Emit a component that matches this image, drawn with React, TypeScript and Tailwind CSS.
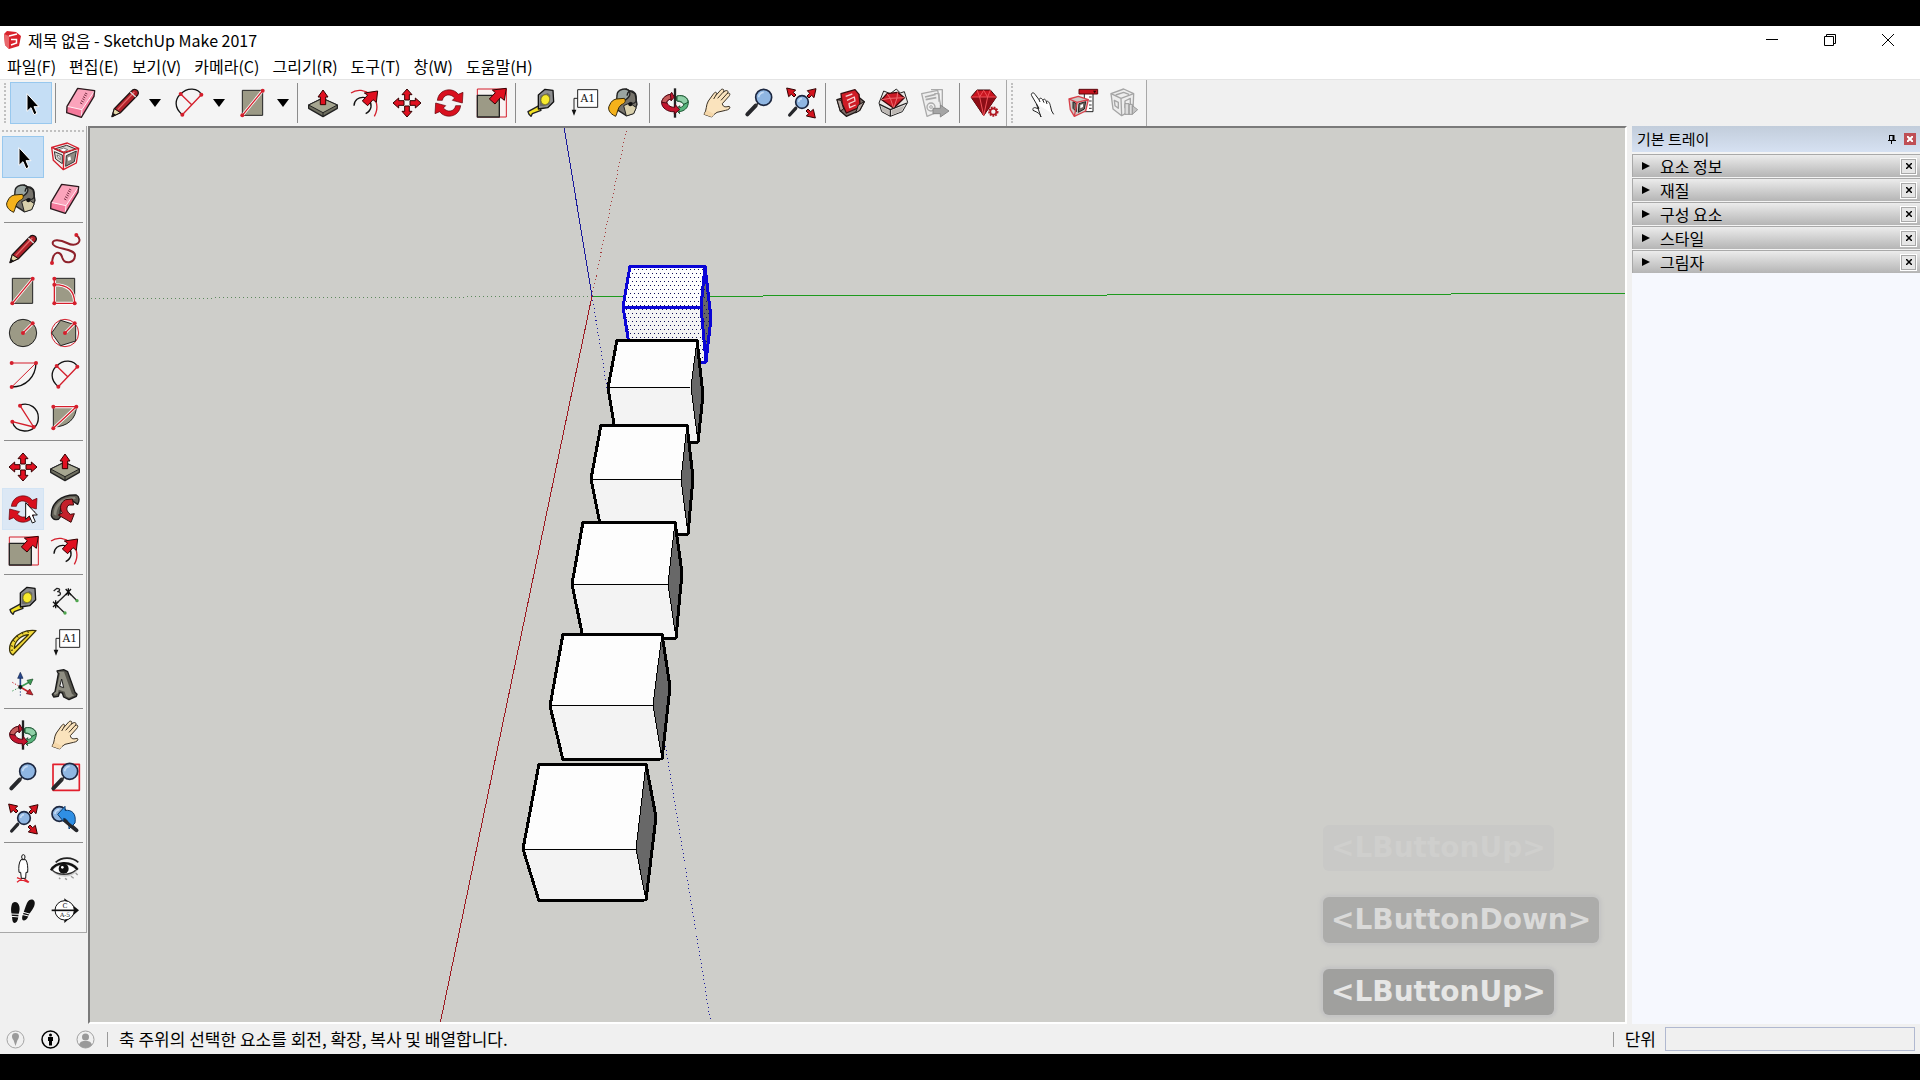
import type { ReactNode } from "react";

const RED = "#e01020";
const OLIVE = "#9c9a86";

type IconProps = { className?: string };

const Icon = ({ children, className = "" }: { children: ReactNode; className?: string }) => (
  <svg
    viewBox="-51 -51 102 102"
    className={`h-[34px] w-[34px] shrink-0 ${className}`}
    fill="none"
    strokeLinejoin="round"
    aria-hidden="true"
  >
    {children}
  </svg>
);

const Dot = ({ x, y }: { x: number; y: number }) => <circle cx={x} cy={y} r="6" fill="#d41f2c" />;

const CursorShape = ({ fill = "#000", stroke = "#fff" }) => (
  <path d="M-12-28V25L0 14 9 35 18 31 9 11H24Z" fill={fill} stroke={stroke} strokeWidth="3" />
);

const SelectIcon = () => (
  <Icon>
    <CursorShape />
  </Icon>
);

const ComponentIcon = () => (
  <Icon>
    <path d="M-40-29 7-42 41-26 34 18-5 38-35 10Z" fill="#f6eded" />
    <path d="M-32-24 5-35 32-24-2-11ZM-32-16-8-6-8 20-28 6Z" fill="#d8d6d0" stroke="#333" strokeWidth="3" />
    <path d="M4-4 34-18 28 14 2 28Z" fill="#8f8b83" stroke="#333" strokeWidth="3" />
    <path d="M-18-22-4-27 8-22-6-14ZM-24-6-15-2-14 8-21 2Z" fill="#fff" stroke="#444" strokeWidth="2" />
    <path d="M8 2 16-2 18 8 10 12Z" fill="#fff" />
    <path d="M-40-29 7-42 41-26 34 18-5 38-35 10ZM-40-29-3-14 41-26M-3-14-5 38" stroke="#d41f2c" strokeWidth="4" />
  </Icon>
);

const PaintIcon = () => (
  <Icon>
    <path d="M-22-31 4-42 30-28 36 4 26 30 4 38-24 20Z" fill="#77746c" stroke="#222" strokeWidth="4" />
    <path d="M-4 8 14 0 34 14 26 32 4 39Z" fill="#d9d0ac" stroke="#222" strokeWidth="3" />
    <path d="M-24-22C-24-44 8-48 14-32 20-12-14-2-26 2Z" fill="#9aa5a1" stroke="#222" strokeWidth="4" />
    <path d="M6-22C10-48 36-36 34-10 34 0 24 4 16-2" stroke="#222" strokeWidth="4" />
    <path d="M-26-12-2-14C4-4 0 0-12 6-22 14-22 28-28 40-46 32-54 18-46 6-42-4-36-10-26-12Z" fill="#f5b21b" stroke="#33270a" strokeWidth="3" />
    <circle cx="16" cy="4" r="6" fill="#111" />
  </Icon>
);

const EraserIcon = () => (
  <Icon>
    <path d="M-10-44 41-37 39-20 1 43-43 29-42 10Z" fill="#f4799b" />
    <path d="M-10-44 41-37 3 20-42 10Z" fill="#fba3bb" />
    <path d="M-42 10 3 20 41-37M3 20 1 43" stroke="#fff0f4" strokeWidth="3" />
    <path d="M-10-44 41-37 39-20 1 43-43 29-42 10Z" stroke="#2b1a1e" strokeWidth="4" />
    <path d="M12-30 19-27M9-25 17-21M6-19 13-15M4-13 11-9M0-7 8-3M-3-1 4 3" stroke="#7d3347" strokeWidth="3" />
  </Icon>
);

const PencilIcon = () => (
  <Icon>
    <path d="M-39 41-32 17 19-35C28-48 46-36 38-24L-14 29Z" fill="#b02029" stroke="#1c1212" strokeWidth="4" />
    <path d="M-39 41-32 17-14 29Z" fill="#e4d7a9" stroke="#1c1212" strokeWidth="3" />
    <path d="M-39 41-35 30-28 35Z" fill="#111" />
    <path d="M-22 20 28-33" stroke="#e36a6a" strokeWidth="4" />
    <path d="M16-33 32-18" stroke="#ddd" strokeWidth="4" />
  </Icon>
);

const FreehandIcon = () => (
  <Icon>
    <path
      d="M34-42C58-22 32-4 6-18-16-30-42-30-36-14-28 2 32-2 30 20 28 44-2 46-8 26-14 4-36 4-39 42"
      stroke="#8e2029"
      strokeWidth="6"
    />
    <Dot x={34} y={-42} />
    <Dot x={-39} y={42} />
  </Icon>
);

const RectangleIcon = () => (
  <Icon>
    <rect x="-32" y="-38" width="61" height="75" fill={OLIVE} stroke="#222" strokeWidth="3" />
    <path d="M-32 37 29-37" stroke="#fff" strokeWidth="9" />
    <path d="M-32 37 29-37" stroke="#d41f2c" strokeWidth="4" />
    <Dot x={-32} y={37} />
    <Dot x={29} y={-37} />
  </Icon>
);

const RotatedRectangleIcon = () => (
  <Icon>
    <rect x="-32" y="-38" width="61" height="75" fill={OLIVE} stroke="#222" strokeWidth="3" />
    <path d="M-32-37V37H29M-32-19C10-19 29 2 29 37" stroke="#fff" strokeWidth="9" />
    <path d="M-32-37V37H29M-32-19C10-19 29 2 29 37" stroke="#d41f2c" strokeWidth="4" />
    <Dot x={-32} y={-37} />
    <Dot x={-32} y={-19} />
    <Dot x={-32} y={37} />
    <Dot x={29} y={37} />
  </Icon>
);

const CircleIcon = () => (
  <Icon>
    <circle r="41" fill={OLIVE} stroke="#222" strokeWidth="3" />
    <path d="M0 0 29-29" stroke="#fff" strokeWidth="9" />
    <path d="M0 0 29-29" stroke="#d41f2c" strokeWidth="4" />
    <Dot x={0} y={0} />
    <Dot x={29} y={-29} />
  </Icon>
);

const PolygonIcon = () => (
  <Icon>
    <circle r="41" stroke="#d41f2c" strokeWidth="3" />
    <path d="M-13-38 32-24V24L-13 38-40 0Z" fill={OLIVE} stroke="#222" strokeWidth="3" />
    <path d="M0 0 29-29" stroke="#fff" strokeWidth="9" />
    <path d="M0 0 29-29" stroke="#d41f2c" strokeWidth="4" />
    <Dot x={0} y={0} />
    <Dot x={29} y={-29} />
  </Icon>
);

const TwoPointArcIcon = () => (
  <Icon>
    <path d="M39-36C38 4 10 36-34 36" stroke="#111" strokeWidth="4" />
    <path d="M-34-36H39L-34 36" stroke="#d41f2c" strokeWidth="3" />
    <Dot x={-34} y={-36} />
    <Dot x={39} y={-36} />
    <Dot x={-34} y={36} />
  </Icon>
);

const ArcIcon = () => (
  <Icon>
    <path d="M-20 35C-46 14-42-12-25-27-6-48 28-46 37-25" stroke="#111" strokeWidth="4" />
    <path d="M37-25-20 35M-25-27 8 5" stroke="#d41f2c" strokeWidth="4" />
    <Dot x={-25} y={-27} />
    <Dot x={37} y={-25} />
    <Dot x={-20} y={35} />
  </Icon>
);

const ThreePointArcIcon = () => (
  <Icon>
    <path d="M-9-36C20-46 46-26 46 2 46 26 28 43 4 42-16 41-28 30-32 14" stroke="#111" strokeWidth="4" />
    <path d="M-9-34 32 30-32 14" stroke="#d41f2c" strokeWidth="4" />
    <Dot x={-9} y={-34} />
    <Dot x={-32} y={14} />
    <Dot x={32} y={30} />
  </Icon>
);

const PieIcon = () => (
  <Icon>
    <path d="M-35-31H34C34 4 8 30-35 30Z" fill={OLIVE} stroke="#222" strokeWidth="3" />
    <path d="M-35-31H34L-35 34" stroke="#fff" strokeWidth="9" />
    <path d="M-35-31H34L-35 34" stroke="#d41f2c" strokeWidth="4" />
    <Dot x={-35} y={-31} />
    <Dot x={34} y={-31} />
    <Dot x={-35} y={34} />
  </Icon>
);

const MoveIcon = () => (
  <Icon>
    {[0, 90, 180, 270].map((angle) => (
      <path
        key={angle}
        d="M0-42 15-25H7V-9H-7V-25H-15Z"
        transform={`rotate(${angle})`}
        fill={RED}
        stroke="#300"
        strokeWidth="3"
      />
    ))}
  </Icon>
);

const PushPullIcon = () => (
  <Icon>
    <path d="M-43 6-2-14 43 6V16L0 41-43 16Z" fill="#6f6f60" stroke="#222" strokeWidth="4" />
    <path d="M-43 6-2-14 43 6 0 29Z" fill="#a6a691" stroke="#222" strokeWidth="3" />
    <path d="M0 29V41" stroke="#222" strokeWidth="3" />
    <path d="M0-39 15-18H8V5H-8V-18H-15Z" fill={RED} stroke="#300" strokeWidth="3" />
  </Icon>
);

const RotateShape = () => (
  <>
    {[0, 180].map((angle) => (
      <path
        key={angle}
        d="M-35-8C-30-44 12-48 28-26L42-32 40 0 10-8 17-15C4-30-16-26-20-8Z"
        transform={`rotate(${angle})`}
        fill="#d8101e"
        stroke="#5a0008"
        strokeWidth="2"
      />
    ))}
  </>
);

const RotateIcon = () => (
  <Icon>
    <RotateShape />
  </Icon>
);

const RotateHoverIcon = () => (
  <Icon className="overflow-visible">
    <RotateShape />
    <path d="M8-19V31L19 21 28 42 37 38 28 18H43Z" fill="#fff" stroke="#111" strokeWidth="3" />
  </Icon>
);

const FollowMeIcon = () => (
  <Icon>
    <path
      d="M-41 20C-42-16-14-44 34-42 44-38 44-24 38-14L20-26C-2-28-18-10-14 24-20 36-36 34-41 20Z"
      fill="#5f5d54"
      stroke="#1a1a1a"
      strokeWidth="4"
    />
    <path d="M-34 16C-34-14-10-36 30-36L32-30C-4-30-26-10-26 20Z" fill="#8c8a7e" />
    <path d="M22-30 2-28C-14-20-18-2-8 12L-20 18 18 40 28 14 16 16C4 8 2-6 12-12L26-12Z" fill="#c4212b" stroke="#3a0a0a" strokeWidth="3" />
  </Icon>
);

const BigArrow = () => (
  <path d="M46-44 40-8 29-17 12 3-5-12 13-31 4-39Z" fill={RED} stroke="#300" strokeWidth="3" />
);

const ScaleIcon = () => (
  <Icon>
    <path d="M-41-42H46V42H-41Z" stroke="#d41f2c" strokeWidth="3" fill="#f9f2f2" />
    <rect x="-41" y="-23" width="66" height="65" fill={OLIVE} stroke="#222" strokeWidth="4" />
    <BigArrow />
  </Icon>
);

const OffsetIcon = () => (
  <Icon>
    <path d="M-42-30C-6-56 58-14 28 40" stroke="#d41f2c" strokeWidth="4" />
    <path d="M-33 8C-32-26 22-26 18 12 16 22 10 28 2 32" stroke="#111" strokeWidth="4" />
    <path d="M38-36 34-2 24-10 8 8-8-6 8-24-2-30Z" fill={RED} stroke="#300" strokeWidth="3" />
  </Icon>
);

const TapeIcon = () => (
  <Icon>
    <path d="M-39 26-6 8 0 22-26 32-30 40-36 34Z" fill="#f3e325" stroke="#222" strokeWidth="4" />
    <path d="M-8-24 12-41 36-38 38-4 20 14-8 18Z" fill="#8e8f90" stroke="#111" strokeWidth="4" />
    <path d="M-2-22 20-30 28-24 26 4 8 10-4 8Z" fill="#6a6a68" />
    <ellipse cx="13" cy="-10" rx="13" ry="15" fill="#f7ea2e" stroke="#776f10" strokeWidth="2" transform="rotate(15 13 -10)" />
  </Icon>
);

const DimensionIcon = () => (
  <Icon>
    <path d="M-28 10 10-27M-28 10-1 36M10-27 36-1" stroke="#222" strokeWidth="4" />
    <path d="M-36 2-20 18M-20 2-36 18M-28-2V22M2-36 18-18M18-36 2-18M10-38V-16" stroke="#111" strokeWidth="4" />
    <path d="M-34-30-24-38C-14-38-14-30-22-28-12-28-10-16-22-16" stroke="#222" strokeWidth="4" />
    <circle cx="0" cy="36" r="5" fill="#4fa64e" />
    <circle cx="36" cy="-1" r="5" fill="#4fa64e" />
  </Icon>
);

const ProtractorIcon = () => (
  <Icon>
    <path
      d="M39-37-30 36C-44 30-44 6-28-12-10-32 14-40 39-37ZM16-25C-8-22-26-4-26 16Z"
      fill="#f2d93a"
      fillRule="evenodd"
      stroke="#3a3208"
      strokeWidth="4"
    />
    <path d="M-36 8-30 10M-30-8-24-4M-18-22-14-16M-2-31 0-26M14-36 16-30M-36 22-30 21" stroke="#3a3208" strokeWidth="3" />
  </Icon>
);

const TextIcon = () => (
  <Icon>
    <rect x="-16" y="-40" width="60" height="53" fill="#fff" stroke="#222" strokeWidth="3" />
    <text x="14" y="-3" fontSize="32" fontFamily="'DejaVu Serif', serif" textAnchor="middle" fill="#111">
      A1
    </text>
    <path d="M-16-14H-27V26" stroke="#222" strokeWidth="3" />
    <path d="M-34 20H-20L-27 38Z" fill="#111" />
  </Icon>
);

const AxesIcon = () => (
  <Icon>
    <path d="M-8 6V-26" stroke="#27478c" strokeWidth="5" />
    <path d="M-8-38 0-20H-16Z" fill="#27478c" stroke="#14264f" strokeWidth="2" />
    <path d="M-8 6 18-8" stroke="#3d9a55" strokeWidth="5" />
    <path d="M30-18 22 0 12-14Z" fill="#3d9a55" stroke="#1c4d29" strokeWidth="2" />
    <path d="M-8 6 16 20" stroke="#c7222c" strokeWidth="5" />
    <path d="M30 30 10 26 20 12Z" fill="#c7222c" stroke="#5d0e12" strokeWidth="2" />
    <path d="M-8 10V36" stroke="#27478c" strokeWidth="3" strokeDasharray="4 5" />
    <path d="M-32 18-8 6" stroke="#3d9a55" strokeWidth="3" strokeDasharray="4 5" />
    <path d="M-32-8-8 6" stroke="#c7222c" strokeWidth="3" strokeDasharray="4 5" />
    <circle cx="-8" cy="6" r="6" fill="#111" />
  </Icon>
);

const ThreeDTextIcon = () => (
  <Icon>
    <path
      d="M-24-42-4-46 8-40 30 22 36 28 34 34 12 44-4 36-8 24-16 22-20 34-34 36-38 28-30 20-20-34Z"
      fill="#55544c"
      stroke="#1a1a1a"
      strokeWidth="4"
    />
    <path d="M-22-40H-3L21 27 28 31 12 38 3 34-1 20-19 14-21 25-30 30-34 25-27 20-15-35Z" fill="#8f8e82" />
    <path d="M-10-18-16 4-4 8Z" fill="#f2f2f2" stroke="#222" strokeWidth="3" />
  </Icon>
);

const OrbitIcon = () => (
  <Icon>
    <path d="M0-44V44" stroke="#222" strokeWidth="7" />
    <path d="M5-20C30-28 46-10 38 8 36 18 22 26 12 26L14 32 2 20 14 8V14C22 12 28 8 26 2 18-6 6-4 4-8Z" fill="#58b47c" stroke="#1d5633" strokeWidth="3" />
    <path d="M6-21C26-26 40-14 39-2L26 4C20-6 12-6 6-6Z" fill="#8fd0a7" stroke="#1d5633" strokeWidth="3" />
    <path d="M-14-26-10-32-2-18-12-6V-12C-22-10-26-4-24 0-18 12-6 14 0 12V4L14 20-2 33V26C-22 28-40 14-40 0-40-14-26-24-14-26Z" fill="#c3142d" stroke="#4f0713" strokeWidth="3" />
    <path d="M-40-2C-38-16-26-24-14-26L-12-12C-22-10-26-4-25 0Z" fill="#c65a5a" stroke="#4f0713" strokeWidth="3" />
  </Icon>
);

const HandIcon = () => (
  <Icon>
    <path
      d="M-39 34C-30 22-34 6-26-6L-10-28C-4-36 2-32-4-22L12-40C18-44 24-40 18-32L24-36C32-40 36-34 30-28L34-30C40-30 40-24 34-18L16 2C18 14 28 12 36 10 42 12 38 20 26 22L0 28C-8 34-14 38-16 42Z"
      fill="#fae3bd"
      stroke="#3a3023"
      strokeWidth="3"
    />
    <path d="M-4-22-10-12M18-32 2-14M30-28 12-8" stroke="#3a3023" strokeWidth="3" />
    <path d="M-16 42-39 34-30 22-8 34Z" fill="#f5d7a9" />
  </Icon>
);

const Lens = ({ cx, cy, r }: { cx: number; cy: number; r: number }) => (
  <>
    <circle cx={cx} cy={cy} r={r} fill="#8fb6e2" stroke="#1c2740" strokeWidth="5" />
    <path d={`M${cx - r + 9} ${cy}A${r - 9} ${r - 9} 0 0 1 ${cx} ${cy - r + 9}`} stroke="#c6dcf4" strokeWidth="5" />
  </>
);

const ZoomIcon = () => (
  <Icon>
    <path d="M-35 34-10 8" stroke="#26272b" strokeWidth="12" strokeLinecap="round" />
    <path d="M-12 10 2-4" stroke="#333" strokeWidth="5" />
    <Lens cx={14} cy={-17} r={24} />
  </Icon>
);

const ZoomWindowIcon = () => (
  <Icon>
    <rect x="-36" y="-38" width="79" height="78" stroke="#e21f2c" strokeWidth="5" />
    <path d="M-35 34-10 8" stroke="#26272b" strokeWidth="12" strokeLinecap="round" />
    <path d="M-12 10 2-4" stroke="#333" strokeWidth="5" />
    <Lens cx={14} cy={-17} r={24} />
  </Icon>
);

const ZoomExtentsIcon = () => (
  <Icon>
    <path d="M-34 36-16 16" stroke="#26272b" strokeWidth="10" strokeLinecap="round" />
    <Lens cx={3} cy={-3} r={19} />
    {[0, 90, 270].map((angle) => (
      <path
        key={angle}
        d="M45-43 39-16 32-23 24-15 18-21 26-29 19-37Z"
        transform={`rotate(${angle})`}
        fill="#d4141f"
        stroke="#300"
        strokeWidth="3"
      />
    ))}
  </Icon>
);

const PreviousViewIcon = () => (
  <Icon>
    <Lens cx={-17} cy={-15} r={22} />
    <path d="M-2 2 35 34" stroke="#26272b" strokeWidth="11" strokeLinecap="round" />
    <path d="M-22-14 0-38V-26C22-28 34-16 30 12L12 30C12 12 8 0-4-2V8Z" fill="#2f8fe4" stroke="#0f3d6e" strokeWidth="3" />
    <path d="M0 6 32 33" stroke="#26272b" strokeWidth="9" strokeLinecap="round" />
  </Icon>
);

const PositionCameraIcon = () => (
  <Icon>
    <path d="M-18 40 0 26 18 40M-18 26 16 40" stroke="#e02430" strokeWidth="4" />
    <ellipse cx="1" cy="-36" rx="5" ry="7" fill="#fff" stroke="#111" strokeWidth="3" />
    <path d="M-6-28H8C14-20 15-4 14 10H9L8 28H-5L-7 10H-12C-14-6-12-20-6-28Z" fill="#fff" stroke="#111" strokeWidth="3" />
  </Icon>
);

const EyeIcon = () => (
  <Icon>
    <path d="M-40 4C-24-26 18-30 40-4 34 18 8 26-10 22-26 20-34 12-40 4Z" fill="#c9c9c9" />
    <path d="M-36 4C-20-16 14-18 32 2 16 18-18 20-36 4Z" fill="#fff" />
    <path d="M-42 4C-28-22 16-26 38 2" stroke="#111" strokeWidth="7" />
    <path d="M-28-20C-8-38 22-36 40-20" stroke="#222" strokeWidth="5" />
    <path d="M-38 4C-20 20 14 20 32 4" stroke="#333" strokeWidth="4" />
    <circle cx="-4" cy="-1" r="15" fill="#111" />
    <circle cx="-8" cy="-5" r="4" fill="#fff" />
    <path d="M-18 26-14 30M0 28 6 32M18 22 26 28M32 12 38 18" stroke="#999" strokeWidth="4" />
  </Icon>
);

const WalkIcon = () => (
  <Icon>
    <path d="M-34-18C-30-32-14-28-11-14-8 0-14 8-14 18-16 38-30 42-32 26-32 12-39 0-34-18Z" fill="#111" />
    <path d="M12-24C20-40 38-36 35-20 32-4 20 4 16 16 8 34-6 32-2 16 2 4 6-10 12-24Z" fill="#111" />
    <path d="M-36 9-10 10M-35 16-12 18M-2 3 23 10M-4 10 20 16" stroke="#fff" strokeWidth="3" />
  </Icon>
);

const SectionIcon = () => (
  <Icon>
    <path d="M-2-38 42-2-2 36Z" fill="#111" />
    <circle cx="-1" cy="-2" r="29" fill="#fff" stroke="#111" strokeWidth="3" />
    <path d="M-40-2H36" stroke="#111" strokeWidth="5" />
    <text x="0" y="-8" fontSize="20" fontFamily="'DejaVu Serif', serif" textAnchor="middle" fill="#111">C</text>
    <text x="0" y="17" fontSize="18" fontFamily="'DejaVu Serif', serif" textAnchor="middle" fill="#111">A-5</text>
  </Icon>
);

const WarehouseIcon = () => (
  <Icon>
    <path d="M-42-10-22-16 20-20 40-4 26 22-14 40-32 24Z" fill="#7b6f6a" stroke="#1d1615" strokeWidth="4" />
    <path d="M-30-28 12-40 24-26 28 12-14 30-26 4Z" fill="#cf1c26" stroke="#3a0b0d" strokeWidth="4" />
    <path d="M-16-20 4-27M-12-8 10-18 12-6-6 2-4 14 14 6" stroke="#f6d0d0" strokeWidth="4" />
    <path d="M-42-10-30-8-22 18-32 24ZM40-4 26 22 14 30 22 6Z" fill="#b3a59f" stroke="#1d1615" strokeWidth="3" />
  </Icon>
);

const ExtensionWarehouseIcon = () => (
  <Icon>
    <path d="M-42 0-28-36-8-28 10-42 22-30 34-34 44-2 28 26-8 40-34 26Z" fill="#e9e6e4" stroke="#222" strokeWidth="3" />
    <path d="M-34-10-18-28 14-32 34-16 2 16Z" fill="#cb1a26" stroke="#3c0709" strokeWidth="4" />
    <path d="M-34-10-8-14 34-16M-18-28-8-14 2 16 12-15 14-32" stroke="#ee6a6e" strokeWidth="3" />
    <path d="M-40 4-8 20-8 40M-8 20 42 0" stroke="#222" strokeWidth="4" />
    <path d="M-36 10-12 22-12 36-32 24ZM-4 22 34 8 26 24-4 36Z" fill="#bdb8b4" />
  </Icon>
);

const LayOutIcon = () => (
  <Icon>
    <path d="M-40-28 8-38 20 22-24 40Z" fill="#eee" stroke="#aaa" strokeWidth="4" />
    <path d="M-12-40H22V10M-2-28H12V-4" stroke="#aaa" strokeWidth="4" />
    <path d="M-30-18 2-26M-28-10 4-16" stroke="#aaa" strokeWidth="5" />
    <circle cx="-12" cy="12" r="12" stroke="#aaa" strokeWidth="4" />
    <circle cx="-12" cy="12" r="4" stroke="#aaa" strokeWidth="3" />
    <path d="M-6 16H16V6L42 24 16 42V32H-6Z" fill="#a5a5a5" stroke="#888" strokeWidth="3" />
  </Icon>
);

const ExtensionManagerIcon = () => (
  <Icon>
    <path d="M-42-18-24-39H16L34-18-4 38Z" fill="#c9141f" stroke="#3b0508" strokeWidth="3" />
    <path d="M-42-18H34L-4 38Z" fill="#8d0d16" />
    <path d="M-24-39-16-18-4-38 8-18 16-39M-42-18H34M-16-18-4 38 8-18" stroke="#ef5158" strokeWidth="3" />
    <circle cx="25" cy="26" r="12" fill="#f3f3f3" stroke="#b01822" strokeWidth="7" strokeDasharray="5 3" />
    <circle cx="25" cy="26" r="9" stroke="#b01822" strokeWidth="5" />
  </Icon>
);

const InteractIcon = () => (
  <Icon>
    <path
      d="M-14 2-28-22C-32-30-22-34-18-26L-6-10C-4-16 2-16 6-8 8-14 14-12 16-4 20-8 26-2 28 8L32 24 38 34M0 42C-2 32-10 28-24 22-26 14-20 12-12 16L-6 16-14 2Z"
      fill="#fff"
      stroke="#222"
      strokeWidth="3"
    />
    <path d="M-6-10-3-3M6-8 9-1M16-4 18 3" stroke="#222" strokeWidth="3" />
  </Icon>
);

const ComponentOptionsIcon = () => (
  <Icon>
    <path d="M4-30H30V26H4Z" fill="#fff" stroke="#222" strokeWidth="3" />
    <path d="M18-18H26M18-6H26M18 6H26M18 16H26" stroke="#333" strokeWidth="3" />
    <path d="M-12-41H44V-27H-12Z" fill="#c5121d" stroke="#5c060b" strokeWidth="3" />
    <path d="M30-37H40L35-29Z" fill="#300" />
    <path d="M-42-12-14-20 16-10 8 24-26 40-38 20Z" fill="#cfc9c5" />
    <path d="M-30-4-20 2V26L-30 16ZM-12 2 8-4 4 18-14 28Z" fill="#6f6862" stroke="#222" strokeWidth="3" />
    <path d="M-8 6 0 3V12L-8 16Z" fill="#fff" />
    <path d="M-42-12-14-20 16-10 8 24-26 40-38 20ZM-42-12-18-2 16-10M-18-2-26 40" stroke="#d8404a" strokeWidth="4" />
  </Icon>
);

const ComponentAttributesIcon = () => (
  <Icon>
    <path d="M-42-28-4-42 26-28 24 20-10 38-36 18Z" fill="#ededed" stroke="#a5a5a5" strokeWidth="4" />
    <path d="M-42-28-12-14 26-28M-12-14-10 38M-28-24-4-32 12-26M-32-8-20-2-20 16-30 8ZM0-6 16-14V6L0 14Z" stroke="#a5a5a5" strokeWidth="4" />
    <path d="M0 2H12V34H0ZM12 4H22V34H12Z" fill="#ddd" stroke="#999" strokeWidth="3" />
    <path d="M22 8 38 20 22 34Z" fill="#c4c4c4" stroke="#999" strokeWidth="3" />
  </Icon>
);

type Tool = { label: string; icon: (props: IconProps) => ReactNode; menu?: boolean; active?: boolean; hover?: boolean };

const mainGroups: Tool[][] = [
  [{ label: "선택", icon: SelectIcon, active: true }],
  [
    { label: "지우개", icon: EraserIcon },
    { label: "선", icon: PencilIcon, menu: true },
    { label: "호", icon: ArcIcon, menu: true },
    { label: "직사각형", icon: RectangleIcon, menu: true },
  ],
  [
    { label: "밀기/끌기", icon: PushPullIcon },
    { label: "오프셋", icon: OffsetIcon },
    { label: "이동", icon: MoveIcon },
    { label: "회전", icon: RotateIcon },
    { label: "배율", icon: ScaleIcon },
  ],
  [
    { label: "줄자", icon: TapeIcon },
    { label: "텍스트", icon: TextIcon },
    { label: "페인트통", icon: PaintIcon },
  ],
  [
    { label: "궤도", icon: OrbitIcon },
    { label: "이동 보기", icon: HandIcon },
    { label: "확대/축소", icon: ZoomIcon },
    { label: "범위 확대/축소", icon: ZoomExtentsIcon },
  ],
  [
    { label: "3D Warehouse", icon: WarehouseIcon },
    { label: "Extension Warehouse", icon: ExtensionWarehouseIcon },
    { label: "LayOut으로 보내기", icon: LayOutIcon },
  ],
  [{ label: "확장 프로그램 관리자", icon: ExtensionManagerIcon }],
];

const dynamicTools: Tool[] = [
  { label: "상호 작용", icon: InteractIcon },
  { label: "구성 요소 옵션", icon: ComponentOptionsIcon },
  { label: "구성 요소 특성", icon: ComponentAttributesIcon },
];

const sideGroups: Tool[][] = [
  [
    { label: "선택", icon: SelectIcon, active: true },
    { label: "구성 요소 만들기", icon: ComponentIcon },
    { label: "페인트통", icon: PaintIcon },
    { label: "지우개", icon: EraserIcon },
  ],
  [
    { label: "선", icon: PencilIcon },
    { label: "자유형", icon: FreehandIcon },
    { label: "직사각형", icon: RectangleIcon },
    { label: "회전된 직사각형", icon: RotatedRectangleIcon },
    { label: "원", icon: CircleIcon },
    { label: "다각형", icon: PolygonIcon },
    { label: "호", icon: TwoPointArcIcon },
    { label: "2점 호", icon: ArcIcon },
    { label: "3점 호", icon: ThreePointArcIcon },
    { label: "파이", icon: PieIcon },
  ],
  [
    { label: "이동", icon: MoveIcon },
    { label: "밀기/끌기", icon: PushPullIcon },
    { label: "회전", icon: RotateHoverIcon, hover: true },
    { label: "따라가기", icon: FollowMeIcon },
    { label: "배율", icon: ScaleIcon },
    { label: "오프셋", icon: OffsetIcon },
  ],
  [
    { label: "줄자", icon: TapeIcon },
    { label: "치수", icon: DimensionIcon },
    { label: "각도기", icon: ProtractorIcon },
    { label: "텍스트", icon: TextIcon },
    { label: "축", icon: AxesIcon },
    { label: "3D 텍스트", icon: ThreeDTextIcon },
  ],
  [
    { label: "궤도", icon: OrbitIcon },
    { label: "이동 보기", icon: HandIcon },
    { label: "확대/축소", icon: ZoomIcon },
    { label: "확대/축소 창", icon: ZoomWindowIcon },
    { label: "범위 확대/축소", icon: ZoomExtentsIcon },
    { label: "이전", icon: PreviousViewIcon },
  ],
  [
    { label: "카메라 배치", icon: PositionCameraIcon },
    { label: "둘러보기", icon: EyeIcon },
    { label: "이동 시점", icon: WalkIcon },
    { label: "단면", icon: SectionIcon },
  ],
];

const ToolButton = ({ tool }: { tool: Tool }) => {
  const state = tool.active
    ? "border-[#98c8ee] bg-[#c5def5]"
    : tool.hover
      ? "border-[#d3e4f4] bg-[#dce8f5]"
      : "border-transparent";
  return (
    <button
      type="button"
      aria-label={tool.label}
      className={`flex h-[42px] w-[42px] shrink-0 items-center justify-center border ${state}`}
    >
      <tool.icon />
    </button>
  );
};

const TitleBar = () => (
  <header className="flex h-7 items-center justify-between">
    <div className="flex items-center gap-1.5 pl-1">
      <svg viewBox="0 0 18 20" className="h-5 w-[18px]" aria-hidden="true">
        <path d="M0 4 3 1 12 2 17 6 15 16 5 19 1 15Z" fill="#d9222c" />
        <path d="M0 4 5 6 5 19 1 15Z" fill="#e8686c" />
        <path d="M5 6 13 4M7 9.500H12.500V13L7 15" fill="none" stroke="#fff" strokeWidth="1.500" />
      </svg>
      <h1 className="text-[16px] leading-5">제목 없음 - SketchUp Make 2017</h1>
    </div>
    <div className="flex pr-[3px]">
      <button type="button" aria-label="최소화" className="flex w-[58px] justify-center">
        <svg viewBox="0 0 12 12" className="h-3 w-3" stroke="#000"><path d="M0 5.500H12" /></svg>
      </button>
      <button type="button" aria-label="이전 크기로" className="flex w-[58px] justify-center">
        <svg viewBox="0 0 12 12" className="h-3 w-3" fill="none" stroke="#000">
          <path d="M.5 2.500H9.500V11.500H.5ZM2.500 2.500V.5H11.500V9.500H9.500" />
        </svg>
      </button>
      <button type="button" aria-label="닫기" className="flex w-[58px] justify-center">
        <svg viewBox="0 0 12 12" className="h-3 w-3" stroke="#000"><path d="M0 0 12 12M12 0 0 12" /></svg>
      </button>
    </div>
  </header>
);

const menus = ["파일(F)", "편집(E)", "보기(V)", "카메라(C)", "그리기(R)", "도구(T)", "창(W)", "도움말(H)"];

const MenuBar = () => (
  <nav className="flex h-[25px] items-start">
    {menus.map((menu) => (
      <button key={menu} type="button" className="pl-[7px] pr-1.5 pt-0.5 text-[16px] leading-5">
        {menu}
      </button>
    ))}
  </nav>
);

const MainToolbar = () => (
  <div className="flex h-[47px] items-stretch border-t border-[#e4e4e4] bg-[#f0f0f0]">
    <div role="toolbar" className="flex items-center border-r border-[#a8a8a8] bg-[#f4f4f4]">
      <span className="ml-1 mr-1 h-10 w-0.5 border-l-2 border-dotted border-[#c0c0c0]" />
      {mainGroups.map((group, index) => (
        <div key={index} className="flex items-center">
          {index > 0 && <span className="ml-[3px] mr-1 h-10 w-px bg-[#8c8c8c]" />}
          {group.map((tool) => (
            <div key={tool.label} className={tool.menu ? "flex pl-0.5" : "flex"}>
              <ToolButton tool={tool} />
              {tool.menu && (
                <button type="button" aria-label={`${tool.label} 메뉴`} className="flex w-5 items-center pl-[3px]">
                  <svg viewBox="0 0 12 8" className="h-2 w-3"><path d="M0 0H12L6 8Z" /></svg>
                </button>
              )}
            </div>
          ))}
        </div>
      ))}
    </div>
    <div role="toolbar" className="flex items-center border-r border-[#a8a8a8] bg-[#f4f4f4]">
      <span className="ml-1 mr-[7px] h-10 w-0.5 border-l-2 border-dotted border-[#c0c0c0]" />
      {dynamicTools.map((tool) => (
        <ToolButton key={tool.label} tool={tool} />
      ))}
    </div>
  </div>
);

const SideToolbar = () => (
  <aside className="w-[88px] shrink-0 bg-[#f0f0f0]">
    <div role="toolbar" className="mr-px border-b border-r border-[#a8a8a8] bg-[#f4f4f4] pl-0.5">
      <div className="flex h-[10px] items-center">
        <span className="h-0.5 w-[82px] border-t-2 border-dotted border-[#c0c0c0]" />
      </div>
      {sideGroups.map((group, index) => (
        <div key={index}>
          {index > 0 && <div className="mb-[5px] ml-0.5 mr-[3px] mt-0.5 h-px bg-[#8c8c8c]" />}
          <div className="grid grid-cols-2">
            {group.map((tool) => (
              <ToolButton key={tool.label} tool={tool} />
            ))}
          </div>
        </div>
      ))}
    </div>
  </aside>
);

type Point = [number, number];
type Cube = { tl: Point; tr: Point; left: Point; front: Point; right: Point; br: Point; bl: Point; selected?: boolean };

const cubes: Cube[] = [
  { tl: [630, 266], tr: [705, 266], left: [623, 307], front: [701, 307], right: [711, 318], br: [706, 362], bl: [632, 362], selected: true },
  { tl: [617, 340], tr: [697, 340], left: [608, 388], front: [691, 387], right: [703, 395], br: [698, 442], bl: [617, 442] },
  { tl: [601, 425], tr: [687, 425], left: [591, 479], front: [681, 479], right: [693, 478], br: [688, 534], bl: [602, 534] },
  { tl: [583, 522], tr: [675, 522], left: [572, 584], front: [668, 584], right: [682, 573], br: [676, 638], bl: [583, 638] },
  { tl: [563, 634], tr: [662, 634], left: [550, 706], front: [653, 705], right: [670, 687], br: [662, 759], bl: [563, 760] },
  { tl: [539, 764], tr: [646, 764], left: [523, 849], front: [636, 849], right: [656, 817], br: [646, 900], bl: [539, 901] },
];

const points = (...list: Point[]) => list.map((point) => point.join(",")).join(" ");

const CubeShape = ({ cube }: { cube: Cube }) => {
  const { tl, tr, left, front, right, br, bl, selected } = cube;
  const line = selected ? "#0b05d6" : "#000";
  const inner = selected ? 3 : 1;
  const outline = points(tl, tr, right, br, bl, left);
  return (
    <g strokeLinejoin="round">
      <polygon points={points(tl, tr, front, left)} fill="#fdfdfd" />
      <polygon points={points(left, front, br, bl)} fill="#f3f3f3" />
      <polygon points={points(tr, right, br, front)} fill="#686868" />
      {selected && <polygon points={outline} fill="url(#selection)" />}
      <polyline points={points(left, front, tr)} fill="none" stroke={line} strokeWidth={inner} />
      <polyline points={points(front, br)} fill="none" stroke={line} strokeWidth={inner} />
      <polygon points={outline} fill="none" stroke={line} strokeWidth="3" />
    </g>
  );
};

const keystrokes = [
  { text: "<LButtonUp>", style: "bg-[#c9c9c7] text-[#cfcfcd]" },
  { text: "<LButtonDown>", style: "bg-[#acacaa] text-[#dadad9] shadow-[0_0_3px_3px_#c6c6c5]" },
  { text: "<LButtonUp>", style: "bg-[#a0a09e] text-[#e6e6e5] shadow-[0_0_3px_3px_#c4c4c4]" },
];

const Viewport = () => (
  <main className="relative min-w-0 flex-1 overflow-hidden border-2 border-b-white border-l-[#7a7a7a] border-r-white border-t-[#7a7a7a] bg-[#cececa]">
    <svg
      viewBox="90 128 1535 894"
      preserveAspectRatio="xMinYMin slice"
      shapeRendering="crispEdges"
      className="absolute inset-0 h-full w-full"
      aria-hidden="true"
    >
      <defs>
        <pattern id="selection" width="4" height="8" patternUnits="userSpaceOnUse">
          <rect x="0" y="1" width="1" height="1" fill="#10105a" />
          <rect x="2" y="5" width="1" height="1" fill="#10105a" />
        </pattern>
      </defs>
      <path d="M592 296 564 127" stroke="#1a1a9c" />
      <path d="M592 296 627 127" stroke="#a33a3a" strokeDasharray="1 3" />
      <path d="M592 296.500 88 298.500" stroke="#5d8a5d" strokeDasharray="1 3" />
      <path d="M592 296.500 1626 293.500" stroke="#1d9a1d" />
      <path d="M592 296 440 1024" stroke="#9c1a22" />
      <path d="M592 296 711 1024" stroke="#1a1a9c" strokeDasharray="1 3" />
      {cubes.map((cube) => (
        <CubeShape key={cube.tl.join()} cube={cube} />
      ))}
    </svg>
    <div className="absolute bottom-[7px] left-[1233px] flex flex-col items-start gap-[26px]">
      {keystrokes.map((key, index) => (
        <kbd
          key={index}
          className={`rounded-md px-2 font-['DejaVu_Sans',sans-serif] text-[28px] font-bold leading-[46px] ${key.style}`}
        >
          {key.text}
        </kbd>
      ))}
    </div>
  </main>
);

const trays = ["요소 정보", "재질", "구성 요소", "스타일", "그림자"];

const Tray = () => (
  <aside className="ml-[5px] flex w-72 shrink-0 flex-col bg-[#f6f8fe]">
    <div className="flex h-[26px] items-center bg-linear-to-b from-[#c2cddb] to-[#d6e1f2] pl-[5px] pr-1">
      <h2 className="flex-1 text-[15px] leading-5">기본 트레이</h2>
      <button type="button" aria-label="자동 숨기기" className="mr-2">
        <svg viewBox="0 0 8 10" className="h-[10px] w-2" fill="none" stroke="#000">
          <path d="M1.500 1V6M1.500 1.500H5M0 6.500H8M3.500 6.500V10" />
          <path d="M5.500 1V6" strokeWidth="2" />
        </svg>
      </button>
      <button type="button" aria-label="트레이 닫기" className="flex h-3 w-3 items-center justify-center bg-[#bf4f55]">
        <svg viewBox="0 0 6 6" className="h-1.5 w-1.5" stroke="#fff" strokeWidth="2"><path d="M0 0 6 6M6 0 0 6" /></svg>
      </button>
    </div>
    <ul className="flex flex-col gap-px bg-[#f4f4f4] pt-0.5">
      {trays.map((tray) => (
        <li
          key={tray}
          className="flex h-[23px] items-center border-l border-t border-[#a9a9a9] bg-linear-to-b from-[#ececec] to-[#b5b5b5] pl-[9px] pr-[3px]"
        >
          <button type="button" className="flex flex-1 items-center gap-[10px] text-left text-[16px] leading-5">
            <svg viewBox="0 0 8 8" className="h-2 w-2"><path d="M0 0 8 4 0 8Z" /></svg>
            {tray}
          </button>
          <button
            type="button"
            aria-label={`${tray} 닫기`}
            className="flex h-[17px] w-[17px] items-center justify-center border border-white bg-[#e6e6e6] outline -outline-offset-2 outline-[#a9a9a9]"
          >
            <svg viewBox="0 0 6 6" className="h-1.5 w-1.5" stroke="#000" strokeWidth="1.500"><path d="M0 0 6 6M6 0 0 6" /></svg>
          </button>
        </li>
      ))}
    </ul>
  </aside>
);

const StatusBar = () => (
  <footer className="flex h-[30px] items-center bg-[#f0f0f0] pl-1.5 pr-[5px] text-[17px] leading-5">
    <div className="flex gap-4">
      <button type="button" aria-label="지리적 위치">
        <svg viewBox="0 0 19 19" className="h-[19px] w-[19px]">
          <circle cx="9.500" cy="9.500" r="8.500" fill="none" stroke="#a5a5a5" />
          <path d="M9.500 3C5 3 5.500 8 7.500 10L9.500 16 11.500 10C13.500 8 14 3 9.500 3Z" fill="#9a9a9a" />
        </svg>
      </button>
      <button type="button" aria-label="크레딧">
        <svg viewBox="0 0 19 19" className="h-[19px] w-[19px]">
          <circle cx="9.500" cy="9.500" r="8.500" fill="none" stroke="#000" strokeWidth="1.500" />
          <circle cx="9.500" cy="5" r="1.500" />
          <path d="M7 7H12V11H11V15.500H8V11H7Z" />
        </svg>
      </button>
      <button type="button" aria-label="로그인">
        <svg viewBox="0 0 19 19" className="h-[19px] w-[19px]">
          <circle cx="9.500" cy="9.500" r="8.500" fill="none" stroke="#a0a0a0" />
          <circle cx="9.500" cy="7" r="3.500" fill="#999" />
          <path d="M3 15C4 11 7 11 9.500 11S15 11 16 15A8.500 8.500 0 0 1 3 15Z" fill="#999" />
        </svg>
      </button>
    </div>
    <span className="ml-3 mr-[11px] h-[15px] w-px bg-[#9a9a9a]" />
    <p className="flex-1">축 주위의 선택한 요소를 회전, 확장, 복사 및 배열합니다.</p>
    <span className="mr-[11px] h-[15px] w-px bg-[#9a9a9a]" />
    <label htmlFor="measurement" className="mr-[9px]">단위</label>
    <input id="measurement" className="h-6 w-[250px] border border-[#b0b8d0] bg-[#f0f0f0] px-1" />
  </footer>
);

export default function App() {
  return (
    <div className="flex min-h-screen flex-col bg-black py-[26px] font-['Noto_Sans_CJK_KR',sans-serif] text-black">
      <div className="flex flex-1 flex-col bg-white">
        <TitleBar />
        <MenuBar />
        <MainToolbar />
        <div className="flex flex-1 bg-[#f0f0f0]">
          <SideToolbar />
          <Viewport />
          <Tray />
        </div>
        <StatusBar />
      </div>
    </div>
  );
}
